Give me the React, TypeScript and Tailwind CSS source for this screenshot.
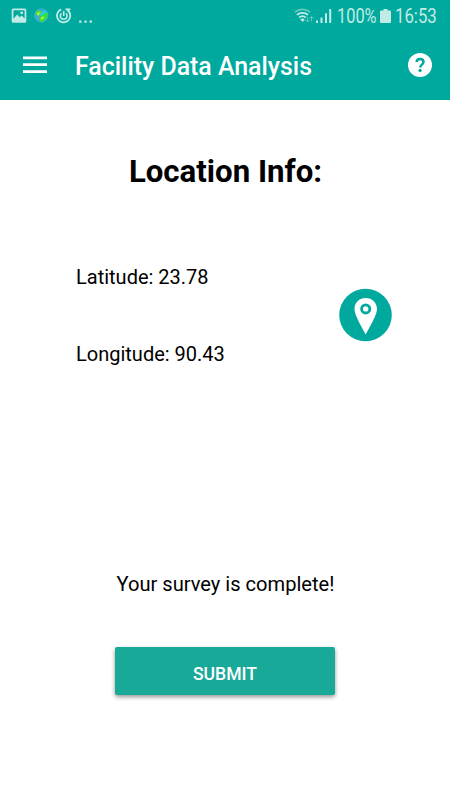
function StatusIcons() {
  return (
    <svg width="96" height="32" viewBox="0 0 96 32" className="shrink-0">
      <path fill="#c2ebe7" fillRule="evenodd" d="M13.2 8.500h11.600a1.500 1.500 0 0 1 1.500 1.500v11.200a1.500 1.500 0 0 1-1.500 1.500H13.200a1.500 1.500 0 0 1-1.500-1.500V10a1.500 1.500 0 0 1 1.500-1.500ZM13.400 10.200v8.600l3.800-4.300 2.400 2.800 2-1.900 3 3v-8.200Z" />
      <circle cx="21.700" cy="12.800" r="1.400" fill="#c2ebe7" />
      <circle cx="41.300" cy="15.500" r="7.200" fill="#39adcc" />
      <path fill="#45d94e" d="M35.500 11.500 38 10.200l4 1.300 1 2-3 1.500-2 2-2-3Z" />
      <path fill="#2fe637" d="m42 14 6-1-.5 4-3 3.500-3.500 2-2-4 2-1.500Z" />
      <path fill="#d0ef38" d="m36.500 13.500 3.500-1.500-1 3-1 .5ZM40.500 18l3-2 .5 2.200-2.500 1.500Z" />
      <path d="M46.500 11 40 15.500" stroke="#22d2f4" strokeWidth="2" />
      <g fill="none" stroke="#c2ebe7">
        <path d="M61.300 9.400a6.700 6.700 0 1 0 7.100 1.600l-1.600-1.700h3.600" strokeWidth="1.800" />
        <path d="M61.500 13.300a3.400 3.400 0 1 0 4.400 0" strokeWidth="1.600" />
        <path d="M63.700 11v5" strokeWidth="1.600" />
      </g>
      <path fill="#c2ebe7" d="M79.200 20.400h2.300v2.300h-2.300ZM84.400 20.400h2.300v2.300h-2.300ZM89.600 20.400h2.300v2.300h-2.300Z" />
    </svg>
  )
}

function SignalIcons() {
  return (
    <svg width="41" height="32" viewBox="0 0 41 32" className="shrink-0">
      <g fill="none" strokeWidth="1.700">
        <path d="M.8 12.100a12 12 0 0 1 15.400 0" stroke="#65c9c1" />
        <path d="M2.900 14.900a8.600 8.600 0 0 1 11.200 0" stroke="#c2ebe7" />
        <path d="M5.200 17.500a5.100 5.100 0 0 1 6.600 0" stroke="#c2ebe7" />
      </g>
      <path d="M6.300 19.500a3.200 3.200 0 0 1 4.500 0l-2.200 2.500Z" fill="#c2ebe7" />
      <path d="M13.500 17v5m-2-2 2 2 2-2M17.500 21.500v-5m-2 2 2-2 2 2" fill="none" stroke="#65c9c1" />
      <path fill="#c2ebe7" d="M22 20.500h2V23h-2ZM26.500 17.500h2V23h-2ZM31 13.300h2V23h-2ZM35.200 9h2v14h-2Z" />
    </svg>
  )
}

export default function App() {
  return (
    <div className="flex h-[800px] w-[450px] flex-col overflow-hidden bg-white font-['Roboto',sans-serif] text-black">
      <header className="h-[100px] shrink-0 bg-[#00a99d] text-white">
        <div className="flex h-8 items-center text-[#c2ebe7]">
          <StatusIcons />
          <div className="ml-auto flex h-8 w-[156px] items-center">
            <SignalIcons />
            <span className="ml-[2px] w-[40px] origin-left scale-x-[0.84] pt-px text-[19.500px] leading-8">100%</span>
            <svg width="12" height="32" viewBox="0 0 12 32" className="ml-[3px] shrink-0">
              <path fill="#c2ebe7" d="M3.500 9h4v1.500H10a1 1 0 0 1 1 1V22a1 1 0 0 1-1 1H1a1 1 0 0 1-1-1V11.500a1 1 0 0 1 1-1h2.500Z" />
            </svg>
            <span className="ml-[3px] w-[42px] origin-left scale-x-[0.86] pt-px text-[19.500px] leading-8">16:53</span>
          </div>
        </div>
        <div className="flex h-[68px] items-center pb-[2px] pl-[23px] pr-[18px]">
          <svg width="24" height="18" viewBox="0 0 24 18" className="shrink-0">
            <path fill="white" d="M0 .5h24v2.700H0ZM0 7.200h24v2.700H0ZM0 14.300h24V17H0Z" />
          </svg>
          <h1 className="ml-[28px] whitespace-nowrap pt-[4px] text-[24.900px] font-medium leading-8">Facility Data Analysis</h1>
          <svg width="24" height="24" viewBox="0 0 24 24" className="ml-auto shrink-0">
            <circle cx="12" cy="12" r="12" fill="white" />
            <path d="M8.700 9.100c0-2 1.400-3.100 3.400-3.100s3.400 1.100 3.400 3c0 2.500-3.300 2.700-3.300 5.500" fill="none" stroke="#00a99d" strokeWidth="2.500" />
            <circle cx="12.100" cy="17.400" r="1.600" fill="#00a99d" />
          </svg>
        </div>
      </header>
      <main className="flex flex-col">
        <h2 className="mt-[52px] pl-px text-center text-[31.200px] font-bold leading-10">Location Info:</h2>
        <section className="mt-[73px] flex h-[101px] items-center justify-between pl-[76px] pr-[58px]">
          <div className="flex flex-col gap-[53px] text-[20px] leading-6">
            <p>Latitude: 23.78</p>
            <p>Longitude: 90.43</p>
          </div>
          <svg width="54" height="54" viewBox="0 0 54 54" className="mb-[2px] shrink-0">
            <circle cx="27.500" cy="27" r="26.300" fill="#00a99d" />
            <path fill="white" fillRule="evenodd" d="M27.700 10c-6.500 0-11.200 4.900-11.200 11 0 5 4.800 14 11.200 25.500C34 35 39 26 39 21c0-6.100-4.800-11-11.300-11Zm0 5.400a5.500 5.500 0 1 1 0 11 5.500 5.500 0 0 1 0-11Z" />
            <circle cx="27.700" cy="20.900" r="2.700" fill="white" />
          </svg>
        </section>
        <p className="mt-[206px] pl-px text-center text-[20.100px] leading-6">Your survey is complete!</p>
        <button className="ml-[115px] mt-[51px] h-[48px] w-[220px] rounded-[2px] bg-[#19a999] pt-[5px] text-[17.600px] font-medium leading-6 text-white shadow-[0_2px_4px_rgba(0,0,0,0.42)]">SUBMIT</button>
      </main>
    </div>
  )
}
